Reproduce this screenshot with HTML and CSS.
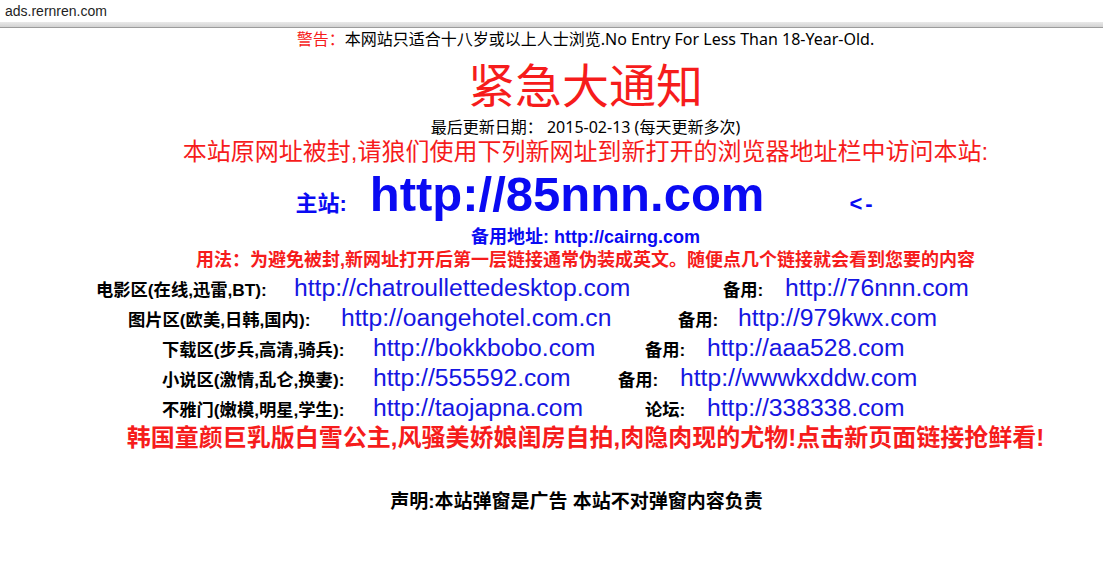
FILE: index.html
```html
<!DOCTYPE html>
<html lang="zh-CN">
<head>
<meta charset="utf-8">
<title>ads.rernren.com</title>
<link rel="stylesheet" href="styles.css">
</head>
<body>
<div class="urlbar">ads.rernren.com</div>
<div class="urlbar-edge"></div>

<div class="notice">
  <div class="warn"><span class="red">警告：</span>本网站只适合十八岁或以上人士浏览.No Entry For Less Than 18-Year-Old.</div>
  <div class="title">紧急大通知</div>
  <div class="date">最后更新日期： 2015-02-13 (每天更新多次)</div>
  <div class="blocked">本站原网址被封,请狼们使用下列新网址到新打开的浏览器地址栏中访问本站:</div>
  <div class="main">
    <span class="main-label">主站:</span>
    <span class="main-url">http://85nnn.com</span>
    <span class="arrow">&lt;-</span>
  </div>
  <div class="backup">备用地址: http://cairng.com</div>
  <div class="usage">用法：为避免被封,新网址打开后第一层链接通常伪装成英文。随便点几个链接就会看到您要的内容</div>
</div>

<div class="links">
  <div class="row row1">
    <span class="lbl">电影区(在线,迅雷,BT):</span>
    <span class="url">http://chatroullettedesktop.com</span>
    <span class="lbl">备用:</span>
    <span class="url">http://76nnn.com</span>
  </div>
  <div class="row row2">
    <span class="lbl">图片区(欧美,日韩,国内):</span>
    <span class="url">http://oangehotel.com.cn</span>
    <span class="lbl">备用:</span>
    <span class="url">http://979kwx.com</span>
  </div>
  <div class="row row3">
    <span class="lbl">下载区(步兵,高清,骑兵):</span>
    <span class="url">http://bokkbobo.com</span>
    <span class="lbl">备用:</span>
    <span class="url">http://aaa528.com</span>
  </div>
  <div class="row row4">
    <span class="lbl">小说区(激情,乱仑,换妻):</span>
    <span class="url">http://555592.com</span>
    <span class="lbl">备用:</span>
    <span class="url">http://wwwkxddw.com</span>
  </div>
  <div class="row row5">
    <span class="lbl">不雅门(嫩模,明星,学生):</span>
    <span class="url">http://taojapna.com</span>
    <span class="lbl">论坛:</span>
    <span class="url">http://338338.com</span>
  </div>
</div>

<div class="notice">
  <div class="promo">韩国童颜巨乳版白雪公主,风骚美娇娘闺房自拍,肉隐肉现的尤物!点击新页面链接抢鲜看!</div>
  <div class="disclaimer">声明:本站弹窗是广告 本站不对弹窗内容负责</div>
</div>
</body>
</html>
```
FILE: styles.css
```css
html, body {
  margin: 0;
  padding: 0;
  background: #ffffff;
}
body {
  font-family: "Liberation Sans", "Noto Sans CJK SC", sans-serif;
  color: #000;
}
.urlbar {
  height: 22px;
  line-height: 22px;
  padding-left: 5px;
  font-size: 14px;
  color: #1e1e1e;
  font-family: "Liberation Sans", sans-serif;
}
.urlbar-edge {
  height: 5px;
  background: linear-gradient(#e9e9e9, #d2d2d2);
  border-bottom: 1px solid #9c9c9c;
}
.notice {
  padding-left: 68px;
  text-align: center;
}
.red { color: #f61c1c; }
.warn {
  font-family: "Noto Sans", "Noto Sans CJK SC", sans-serif;
  font-size: 16px;
  line-height: 22px;
  height: 22px;
}
.title {
  margin-top: 9px;
  font-family: "Noto Sans CJK SC", sans-serif;
  font-size: 47px;
  line-height: 48px;
  height: 48px;
  color: #f61c1c;
}
.date {
  margin-top: 10px;
  font-family: "Noto Sans", "Noto Sans CJK SC", sans-serif;
  font-size: 16px;
  line-height: 20px;
  height: 20px;
}
.blocked {
  margin-top: 1px;
  font-size: 24px;
  line-height: 28px;
  height: 28px;
  color: #f61c1c;
}
.main {
  margin-top: 4px;
  height: 49px;
  display: flex;
  justify-content: center;
  align-items: baseline;
  color: #0a0af2;
  font-weight: 700;
}
.main-label {
  font-size: 22px;
  line-height: 49px;
}
.main-url {
  margin-left: 23px;
  font-size: 49px;
  line-height: 49px;
}
.arrow {
  margin-left: 85px;
  font-size: 22px;
  line-height: 49px;
  letter-spacing: 3px;
}
.backup {
  margin-top: 7px;
  font-size: 18px;
  font-weight: 700;
  line-height: 22px;
  height: 22px;
  color: #0a0af2;
}
.usage {
  margin-top: 1px;
  font-size: 18px;
  font-weight: 700;
  line-height: 22px;
  height: 22px;
  color: #f61c1c;
}
.links {
  margin-top: 2px;
}
.row {
  display: grid;
  height: 30px;
  line-height: 30px;
  align-items: baseline;
}
.row1 { padding-left: 96px; grid-template-columns: 198px 429px 62px auto; }
.row2 { padding-left: 128px; grid-template-columns: 213px 337px 60px auto; }
.row3 { padding-left: 162px; grid-template-columns: 211px 272px 62px auto; }
.row4 { padding-left: 162px; grid-template-columns: 211px 245px 62px auto; }
.row5 { padding-left: 162px; grid-template-columns: 211px 272px 62px auto; }
.lbl {
  font-size: 17.3px;
  font-weight: 700;
  white-space: nowrap;
}
.url {
  font-size: 24.7px;
  color: #1616e2;
  white-space: nowrap;
}
.promo {
  font-size: 24px;
  font-weight: 700;
  line-height: 30px;
  height: 30px;
  color: #f61c1c;
  white-space: nowrap;
}
.disclaimer {
  margin-top: 37px;
  padding-right: 18px;
  font-size: 19px;
  font-weight: 700;
  line-height: 24px;
  height: 24px;
}
```
